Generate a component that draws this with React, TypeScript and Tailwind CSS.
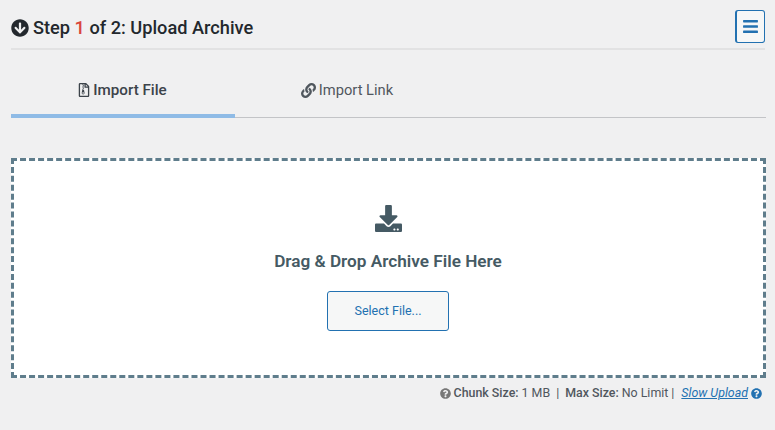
import React from 'react';
import { FaArrowCircleDown, FaBars, FaDownload, FaLink, FaQuestionCircle, FaRegFileArchive } from 'react-icons/fa';

const App: React.FC = () => {
    return (
        <div className="w-[775px] h-[430px] overflow-hidden bg-[#f0f0f1] pl-[11px] pr-[9px] font-['Roboto',sans-serif] text-[#23282d]">
            {/* Step header */}
            <div className="mr-[1px] flex h-[50px] items-start justify-between border-b-2 border-[#e2e2e3] pt-[10px]">
                <h1 className="flex h-[35px] items-center gap-[4px] text-[18.2px] font-medium">
                    <FaArrowCircleDown className="text-[18px] text-[#23282d]" />
                    <span>
                        Step <span className="text-[#d9453a]">1</span> of 2: Upload Archive
                    </span>
                </h1>
                <button className="flex h-[33px] w-[30px] items-center justify-center rounded-[3px] border border-l-2 border-[#2271b1] bg-[#f6f7f7] text-[#2271b1]">
                    <FaBars className="text-[17px]" />
                </button>
            </div>

            {/* Tabs */}
            <div className="flex h-[68px] border-b border-[#c3c4c7]">
                <div className="-mb-px flex w-[224px] items-center justify-center gap-[2px] border-b-4 border-[#8fbbe6] pt-[16px] pr-[2px] text-[15.2px] font-medium text-[#3c434a]">
                    <FaRegFileArchive className="text-[14px]" />
                    Import File
                </div>
                <div className="-mb-px flex w-[224px] items-center justify-center gap-[3px] pt-[16px] pb-[4px] text-[14.7px] text-[#50575e]">
                    <FaLink className="text-[15px]" />
                    Import Link
                </div>
            </div>

            {/* Drop zone */}
            <div className="mt-[40px] flex h-[220px] flex-col items-center border-[3px] border-dashed border-[#5f7d8c] bg-white pt-[44px]">
                <FaDownload className="-ml-px text-[27px] text-[#455a64]" />
                <div className="mt-[17px] -ml-px text-[17.2px] font-semibold leading-[24px] text-[#455a64]">
                    Drag &amp; Drop Archive File Here
                </div>
                <button className="mt-[18px] -ml-px flex h-[40px] w-[122px] items-center justify-center rounded-[3px] border border-[#2271b1] bg-[#f6f7f7] text-[12.5px] text-[#2271b1]">
                    Select File...
                </button>
            </div>

            {/* Limits */}
            <div className="mt-[7px] flex items-center justify-end gap-[3px] pr-[4px] text-[12.4px] leading-[16px] text-[#50575e]">
                <FaQuestionCircle className="text-[11px] text-[#777]" />
                <b className="font-medium">Chunk Size:</b>
                <span>1 MB</span>
                <span className="mx-[3px]">|</span>
                <b className="font-medium">Max Size:</b>
                <span>No Limit</span>
                <span>|</span>
                <a className="ml-[4px] italic text-[#2271b1] underline">Slow Upload</a>
                <FaQuestionCircle className="text-[11px] text-[#2271b1]" />
            </div>
        </div>
    );
};

export default App;
